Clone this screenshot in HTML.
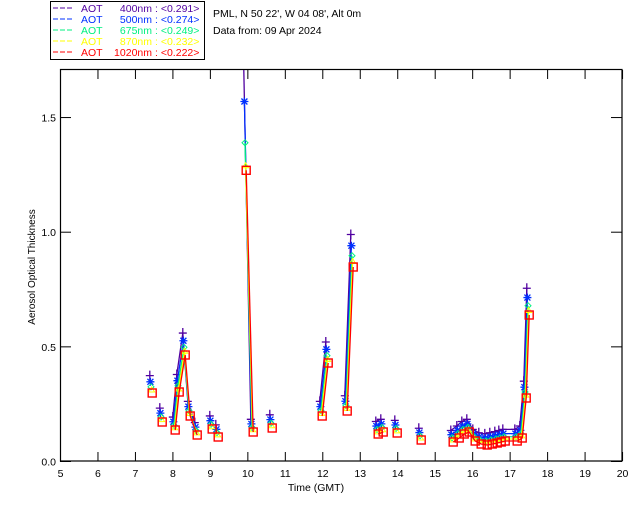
<!DOCTYPE html>
<html><head><meta charset="utf-8"><style>
html,body{margin:0;padding:0;background:#fff;}
svg{display:block;font-family:"Liberation Sans",sans-serif;}
text{white-space:pre;}
</style></head><body>
<svg id="s" width="640" height="512" xmlns="http://www.w3.org/2000/svg" xml:space="preserve">
<rect x="50.5" y="1.5" width="154" height="58" fill="#fff" stroke="#000"/>
<g id="lg" font-size="10.5"></g>
<g font-size="10.5">
<text x="213" y="17" fill="#000">PML, N 50 22', W 04 08', Alt 0m</text>
<text x="213" y="34" fill="#000">Data from: 09 Apr 2024</text>
</g>
<rect x="60.5" y="69.5" width="561.5" height="391.5" fill="none" stroke="#000" stroke-width="1.2"/>
<g id="ax" stroke="#000" font-size="10.5"></g>
<text x="316" y="491" font-size="10.5" text-anchor="middle">Time (GMT)</text>
<text transform="translate(35,267) rotate(-90)" font-size="10" text-anchor="middle">Aerosol Optical Thickness</text>
<g id="d"></g>
</svg>
<script>
var ns="http://www.w3.org/2000/svg",ax=document.getElementById('ax'),d=document.getElementById('d'),lg=document.getElementById('lg');
function el(p,t,a,txt){var e=document.createElementNS(ns,t);for(var k in a)e.setAttribute(k,a[k]);if(txt)e.textContent=txt;p.appendChild(e);return e;}
var L=[['#5000a0','400nm','0.291'],['#0030ff','500nm','0.274'],['#00f080','675nm','0.249'],['#ffff00','870nm','0.232'],['#ff0000','1020nm','0.222']];
L.forEach(function(r,i){var y=12+i*11;
el(lg,'line',{x1:53,x2:74,y1:y-4,y2:y-4,stroke:r[0],'stroke-dasharray':'5 2'});
el(lg,'text',{x:81,y:y,fill:r[0]},'AOT');
el(lg,'text',{x:152,y:y,fill:r[0],'text-anchor':'end'},r[1]);
el(lg,'text',{x:155,y:y,fill:r[0]},': <'+r[2]+'>');});
function X(t){return 60.5+(t-5)*37.47;}
function Y(v){return 461.5-229.3*v;}
for(var h=5;h<=20;h++){var x=X(h);el(ax,'line',{x1:x,x2:x,y1:461,y2:452});el(ax,'line',{x1:x,x2:x,y1:70,y2:79});el(ax,'text',{x:x,y:477,'text-anchor':'middle',stroke:'none'},String(h));}
[0,0.5,1,1.5].forEach(function(v){var y=Y(v);el(ax,'line',{x1:60,x2:71,y1:y,y2:y});el(ax,'line',{x1:611,x2:622,y1:y,y2:y});el(ax,'text',{x:56,y:y+4,'text-anchor':'end',stroke:'none'},v.toFixed(1));});
var groups=[[[151,393]],[[161,422]],[[174,430],[178,392],[184,355],[189,416],[196,435]],[[211,429]],[[217,437]],[[245,172,1],[252,432]],[[271,428]],[[321,416],[327,363]],[[346,411],[352,267]],[[377,434],[382,432]],[[396,433]],[[420,440]],[[452,442],[458,438],[463,434],[468,432],[474,441],[480,444],[486,445],[491,444],[496,443],[500,442],[504,441],[516,441],[521,438],[525,398],[528,315]]];
var peak=[1.8,1.57,1.39,1.29,1.27];
var ser=[{c:'#5000a0',f:1.12,o:0.04,m:'+'},{c:'#0030ff',f:1.08,o:0.025,m:'*'},{c:'#00f080',f:1.04,o:0.015,m:'d'},{c:'#ffff00',f:1.02,o:0.007,m:'t'},{c:'#ff0000',f:1,o:0,m:'s'}];
ser.forEach(function(s,i){groups.forEach(function(g){var pts=g.map(function(p){var v=(461.5-p[1])/229.3;v=p[2]?peak[i]:v*s.f+s.o;var y=Math.max(70,Y(v));return [p[0]+(i-2)*0.6,y];});
if(pts.length>1)el(d,'polyline',{points:pts.map(function(p){return p.join(',')}).join(' '),fill:'none',stroke:s.c,'stroke-width':1.3});
pts.forEach(function(p){var x=p[0],y=p[1];if(y<=71)return;
if(s.m=='+'){el(d,'path',{d:'M'+(x-4)+' '+y+'h8M'+x+' '+(y-5)+'v10',stroke:s.c,'stroke-width':1.3});}
else if(s.m=='*'){el(d,'path',{d:'M'+(x-4)+' '+y+'h8M'+x+' '+(y-4)+'v8M'+(x-3)+' '+(y-3)+'l6 6M'+(x+3)+' '+(y-3)+'l-6 6',stroke:s.c,'stroke-width':1.3});}
else if(s.m=='d'){el(d,'path',{d:'M'+x+' '+(y-3)+'l3 3l-3 3l-3 -3z',stroke:s.c,fill:'none'});}
else if(s.m=='t'){el(d,'path',{d:'M'+x+' '+(y-3)+'l3 5h-6z',stroke:s.c,fill:'none'});}
else{el(d,'rect',{x:x-4,y:y-4,width:8,height:8,stroke:s.c,fill:'none','stroke-width':1.4});}
});});});
</script>
</body></html>
